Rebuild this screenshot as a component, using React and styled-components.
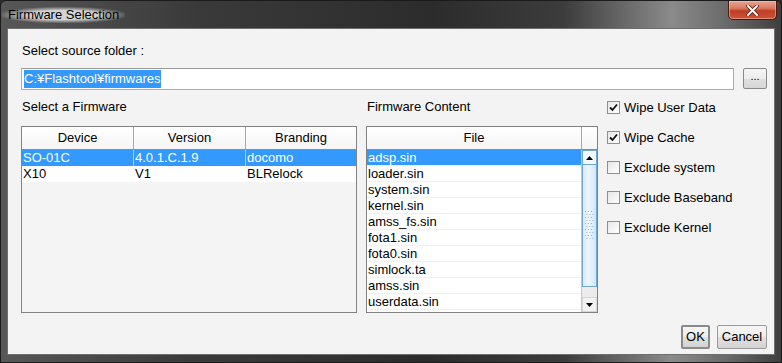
import React from 'react';
import styled, { createGlobalStyle } from 'styled-components';

const GlobalStyle = createGlobalStyle`
  html, body {
    margin: 0;
    padding: 0;
    background: #2b2b2b;
  }
  body {
    font-family: "Liberation Sans", Arial, sans-serif;
    font-size: 13px;
    color: #000;
  }
`;

const Window = styled.div`
  width: 782px;
  height: 363px;
  box-sizing: border-box;
  display: flex;
  flex-direction: column;
  border: 1px solid #1b1b1b;
  border-radius: 6px 6px 0 0;
  overflow: hidden;
  background: linear-gradient(
    to right,
    #575757 0%,
    #3a3a3a 25%,
    #2c2c2c 55%,
    #3c3c3c 72%,
    #8a8a8a 86%,
    #6a6a6a 93%,
    #3e3e3e 100%
  );
`;

const TitleBar = styled.div`
  height: 27px;
  flex-shrink: 0;
  display: flex;
  justify-content: space-between;
  align-items: flex-start;
  padding: 0 4px 0 7px;
`;

const Title = styled.span`
  margin-top: 6px;
  line-height: 16px;
  font-size: 13px;
  color: #000;
  background: radial-gradient(ellipse at center, rgba(235, 235, 235, 0.85) 40%, rgba(235, 235, 235, 0) 75%);
  padding: 0 6px;
  margin-left: -6px;
`;

const CloseButton = styled.div`
  width: 49px;
  height: 19px;
  box-sizing: border-box;
  border: 1px solid #4a1a10;
  border-top: none;
  border-radius: 0 0 5px 5px;
  background: linear-gradient(#e5a594 0%, #d97a62 40%, #c13d22 55%, #c9553a 100%);
  box-shadow: inset 0 0 0 1px rgba(255, 200, 190, 0.5);
  display: flex;
  align-items: center;
  justify-content: center;
`;

const Client = styled.div`
  flex: 1;
  margin: 0 6px 7px 6px;
  background: #f3f3f3;
  border: 1px solid #6e6e6e;
  display: flex;
  flex-direction: column;
  padding: 14px 7px 5px 13px;
`;

const Label = styled.div`
  line-height: 16px;
  padding-left: 1px;
  white-space: nowrap;
`;

const PathRow = styled.div`
  display: flex;
  gap: 9px;
  margin-top: 9px;
  height: 22px;
`;

const PathField = styled.div`
  flex: 1;
  box-sizing: border-box;
  border: 1px solid #abadb3;
  border-top-color: #9a9a9a;
  background: #fff;
  padding: 1px 2px;
`;

const Highlight = styled.span`
  display: inline-block;
  line-height: 18px;
  background: #3399ff;
  color: #fff;
`;

const SmallButton = styled.div`
  width: 24px;
  height: 21px;
  box-sizing: border-box;
  border: 1px solid #8a8a8a;
  border-radius: 2px;
  background: linear-gradient(#f6f6f6 0%, #ececec 50%, #e0e0e0 51%, #d6d6d6 100%);
  font-size: 11px;
  line-height: 15px;
  text-align: center;
`;

const Columns = styled.div`
  display: grid;
  grid-template-columns: 336px 232px 1fr;
  grid-template-rows: 16px 187px;
  column-gap: 9px;
  row-gap: 11px;
  margin-top: 9px;
`;

const Options = styled.div`
  grid-column: 3;
  grid-row: 1 / span 2;
  display: flex;
  flex-direction: column;
  gap: 14px;
`;

const Option = styled.label`
  display: flex;
  align-items: center;
  gap: 4px;
  height: 16px;
  white-space: nowrap;
`;

const Box = styled.span`
  width: 13px;
  height: 13px;
  box-sizing: border-box;
  border: 1px solid #8e8f8f;
  background: linear-gradient(135deg, #e6e6e6, #ffffff);
  display: flex;
  align-items: center;
  justify-content: center;
`;

const ListFrame = styled.div`
  box-sizing: border-box;
  border: 1px solid #828282;
  background: #f4f4f4;
  display: flex;
  flex-direction: column;
  overflow: hidden;
`;

const Header = styled.div`
  display: grid;
  grid-template-columns: ${(p) => p.$cols};
  height: 22px;
  flex-shrink: 0;
  border-bottom: 1px solid #8c8c8c;
  background: linear-gradient(#ffffff, #f5f5f5);
`;

const HeadCell = styled.div`
  line-height: 22px;
  text-align: center;
  border-right: 1px solid #a8a8a8;
  &:last-child {
    border-right: none;
  }
`;

const Row = styled.div`
  display: grid;
  grid-template-columns: ${(p) => p.$cols};
  height: 16px;
  background: ${(p) => (p.$selected ? '#3399ff' : '#fff')};
  color: ${(p) => (p.$selected ? '#fff' : '#000')};
`;

const Cell = styled.div`
  line-height: 16px;
  padding-left: 1px;
  white-space: nowrap;
  overflow: hidden;
  border-right: 1px solid ${(p) => (p.$selected ? '#a6d0fb' : '#fff')};
  &:last-child {
    border-right: none;
  }
`;

const FileBody = styled.div`
  flex: 1;
  display: flex;
  min-height: 0;
`;

const FileRows = styled.div`
  flex: 1;
  background: #fff;
  overflow: hidden;
`;

const FileRow = styled.div`
  height: 16px;
  box-sizing: border-box;
  line-height: 15px;
  padding-left: 1px;
  border-bottom: 1px solid #f0f0f0;
  white-space: nowrap;
  background: ${(p) => (p.$selected ? '#3399ff' : '#fff')};
  color: ${(p) => (p.$selected ? '#fff' : '#000')};
`;

const ScrollBar = styled.div`
  width: 15px;
  border-left: 1px solid #c8c8c8;
  display: flex;
  flex-direction: column;
  background: #ececec;
`;

const Arrow = styled.div`
  height: 15px;
  flex-shrink: 0;
  display: flex;
  align-items: center;
  justify-content: center;
  background: ${(p) => (p.$hot ? '#f4f9fe' : '#f2f2f2')};
  border: 1px solid ${(p) => (p.$hot ? '#6fa6d6' : '#d6d6d6')};
  box-sizing: border-box;
`;

const Thumb = styled.div`
  height: 122px;
  box-sizing: border-box;
  border: 1px solid #6fa6d6;
  border-top: none;
  background: linear-gradient(to right, #d9ebfb, #eef6fe 45%, #cfe5f9);
  display: flex;
  align-items: center;
  justify-content: center;
`;

const Track = styled.div`
  flex: 1;
`;

const Footer = styled.div`
  display: flex;
  justify-content: flex-end;
  gap: 7px;
  margin-top: 12px;
`;

const Button = styled.div`
  width: ${(p) => p.$width}px;
  height: 24px;
  box-sizing: border-box;
  border: ${(p) => (p.$default ? '2px solid #8a8a8a' : '1px solid #9a9a9a')};
  border-radius: 2px;
  background: linear-gradient(#f6f6f6 0%, #ececec 50%, #e0e0e0 51%, #d3d3d3 100%);
  line-height: ${(p) => (p.$default ? '20px' : '22px')};
  text-align: center;
`;

const firmwareCols = '112px 112px 1fr';
const firmwares = [
  { device: 'SO-01C', version: '4.0.1.C.1.9', branding: 'docomo', selected: true },
  { device: 'X10', version: 'V1', branding: 'BLRelock' },
];

const files = [
  'adsp.sin',
  'loader.sin',
  'system.sin',
  'kernel.sin',
  'amss_fs.sin',
  'fota1.sin',
  'fota0.sin',
  'simlock.ta',
  'amss.sin',
  'userdata.sin',
  'cache.sin',
];

const options = [
  { label: 'Wipe User Data', checked: true },
  { label: 'Wipe Cache', checked: true },
  { label: 'Exclude system' },
  { label: 'Exclude Baseband' },
  { label: 'Exclude Kernel' },
];

const Check = () => (
  <svg width="9" height="9" viewBox="0 0 9 9">
    <path d="M1 4.5 L3.5 7 L8 1.5" fill="none" stroke="#111" strokeWidth="1.8" />
  </svg>
);

const Grip = () => (
  <svg width="9" height="30" viewBox="0 0 9 30">
    {Array.from({ length: 10 }).map((_, r) =>
      [0, 1, 2].map((c) => (
        <rect key={`${r}-${c}`} x={c * 3 + (r % 2) * 1.5} y={r * 3} width="1" height="1" fill="#8fb3d3" />
      ))
    )}
  </svg>
);

const App = () => {
  return (
    <>
      <GlobalStyle />
      <Window>
        <TitleBar>
          <Title>Firmware Selection</Title>
          <CloseButton>
            <svg width="13" height="11" viewBox="0 0 13 11">
              <path d="M2 1 L11 10 M11 1 L2 10" stroke="#5a1a10" strokeWidth="3.6" strokeLinecap="square" />
              <path d="M2 1 L11 10 M11 1 L2 10" stroke="#fff" strokeWidth="2" strokeLinecap="square" />
            </svg>
          </CloseButton>
        </TitleBar>
        <Client>
          <Label>Select source folder :</Label>
          <PathRow>
            <PathField>
              <Highlight>C:¥Flashtool¥firmwares</Highlight>
            </PathField>
            <SmallButton>...</SmallButton>
          </PathRow>
          <Columns>
            <Label>Select a Firmware</Label>
            <Label>Firmware Content</Label>
            <Options>
              {options.map((o) => (
                <Option key={o.label}>
                  <Box>{o.checked && <Check />}</Box>
                  {o.label}
                </Option>
              ))}
            </Options>
            <ListFrame>
              <Header $cols={firmwareCols}>
                <HeadCell>Device</HeadCell>
                <HeadCell>Version</HeadCell>
                <HeadCell>Branding</HeadCell>
              </Header>
              {firmwares.map((f) => (
                <Row key={f.device} $cols={firmwareCols} $selected={f.selected}>
                  <Cell $selected={f.selected}>{f.device}</Cell>
                  <Cell $selected={f.selected}>{f.version}</Cell>
                  <Cell $selected={f.selected}>{f.branding}</Cell>
                </Row>
              ))}
            </ListFrame>
            <ListFrame>
              <Header $cols="1fr 15px">
                <HeadCell>File</HeadCell>
                <HeadCell />
              </Header>
              <FileBody>
                <FileRows>
                  {files.map((name, i) => (
                    <FileRow key={name} $selected={i === 0}>
                      {name}
                    </FileRow>
                  ))}
                </FileRows>
                <ScrollBar>
                  <Arrow $hot>
                    <svg width="7" height="4" viewBox="0 0 7 4">
                      <path d="M0 4 L3.5 0 L7 4 Z" fill="#000" />
                    </svg>
                  </Arrow>
                  <Thumb>
                    <Grip />
                  </Thumb>
                  <Track />
                  <Arrow>
                    <svg width="7" height="4" viewBox="0 0 7 4">
                      <path d="M0 0 L3.5 4 L7 0 Z" fill="#000" />
                    </svg>
                  </Arrow>
                </ScrollBar>
              </FileBody>
            </ListFrame>
          </Columns>
          <Footer>
            <Button $default $width={29}>OK</Button>
            <Button $width={50}>Cancel</Button>
          </Footer>
        </Client>
      </Window>
    </>
  );
};

export default App;
